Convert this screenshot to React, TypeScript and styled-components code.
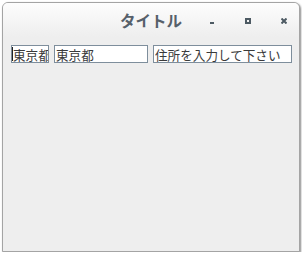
import React from "react";
import styled, { createGlobalStyle } from "styled-components";

const Global = createGlobalStyle`
  html, body { margin: 0; padding: 0; background: #ffffff; }
  body { font-family: "Noto Sans CJK JP", "Noto Sans", sans-serif; }
`;

const Window = styled.div`
  box-sizing: border-box;
  margin: 2px 0 0 2px;
  width: 298px;
  height: 250px;
  border: 1px solid #a4a4a4;
  border-radius: 6px 6px 0 0;
  background: #eeeeee;
  box-shadow: 1px 1px 2px rgba(0, 0, 0, 0.45);
  display: flex;
  flex-direction: column;
  overflow: hidden;
`;

const TitleBar = styled.div`
  height: 34px;
  display: grid;
  grid-template-columns: 1fr auto 1fr;
  align-items: center;
  background: linear-gradient(#fdfdfd, #eeeeee);
`;

const Title = styled.div`
  grid-column: 2;
  font-family: "Noto Sans CJK JP", sans-serif;
  font-weight: 700;
  font-size: 15.5px;
  color: #56606a;
  line-height: 1;
  padding-top: 1px;
`;

const Buttons = styled.div`
  grid-column: 3;
  justify-self: end;
  display: flex;
  gap: 6px;
`;

const WinButton = styled.div`
  width: 30px;
  height: 20px;
  display: flex;
  align-items: center;
  justify-content: center;
  padding-top: 1px;
`;

const Row = styled.div`
  display: flex;
  gap: 5px;
  padding: 8px 0 0 8px;
`;

const FieldWrap = styled.div`
  position: relative;
  display: flex;
`;

const Field = styled.input<{ $w: number }>`
  box-sizing: border-box;
  width: ${(p) => p.$w}px;
  height: 18px;
  margin: 0;
  padding: 0 0 0 1px;
  border: 1px solid #7e8e9c;
  background: #ffffff;
  font-family: "Noto Sans CJK JP", sans-serif;
  font-size: 12.6px;
  color: #3a3a3a;
  outline: none;
  caret-color: transparent;
  &::placeholder { color: #3a3a3a; opacity: 1; }
`;

const Caret = styled.span`
  position: absolute;
  left: 1px;
  top: 2px;
  width: 1px;
  height: 14px;
  background: #222;
`;

const ICON = "#4d5a63";

export default function App() {
  return (
    <>
      <Global />
      <Window>
        <TitleBar>
          <Title>タイトル</Title>
          <Buttons>
            <WinButton>
              <svg width="6" height="6" viewBox="0 0 6 6">
                <rect x="1" y="4" width="4" height="2" fill={ICON} />
              </svg>
            </WinButton>
            <WinButton>
              <svg width="6" height="6" viewBox="0 0 6 6">
                <rect x="1" y="1" width="4" height="4" fill="none" stroke={ICON} strokeWidth="2" />
              </svg>
            </WinButton>
            <WinButton>
              <svg width="6" height="6" viewBox="0 0 6 6">
                <path d="M0.5 0.5 L5.5 5.5 M5.5 0.5 L0.5 5.5" stroke={ICON} strokeWidth="2" />
              </svg>
            </WinButton>
          </Buttons>
        </TitleBar>
        <Row>
          <FieldWrap>
            <Field $w={38} defaultValue="東京都" />
            <Caret />
          </FieldWrap>
          <Field $w={94} defaultValue="東京都" />
          <Field $w={139} placeholder="住所を入力して下さい" />
        </Row>
      </Window>
    </>
  );
}
